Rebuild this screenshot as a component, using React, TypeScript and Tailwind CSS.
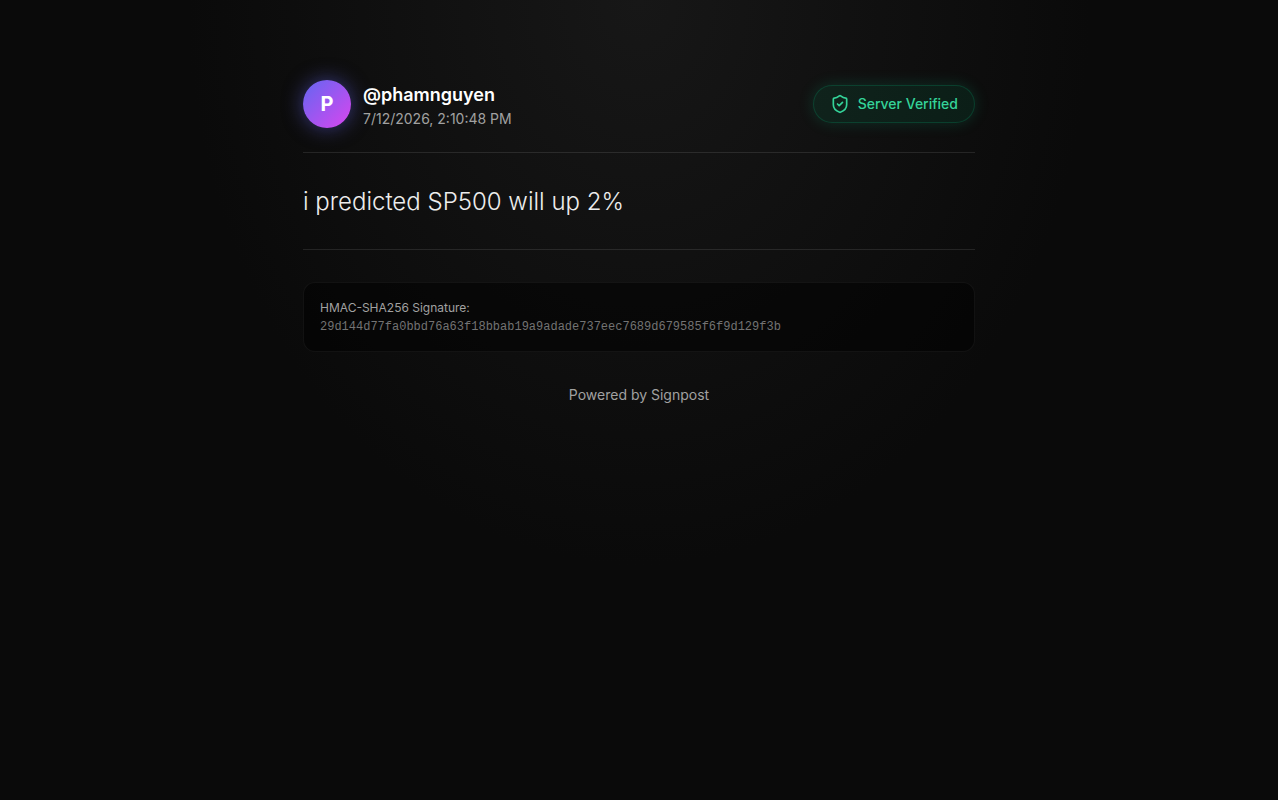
import React from "react";
import { ShieldCheck } from "lucide-react";

const post = {
  handle: "phamnguyen",
  signedAt: "7/12/2026, 2:10:48 PM",
  content: "i predicted SP500 will up 2%",
  signature: "29d144d77fa0bbd76a63f18bbab19a9adade737eec7689d679585f6f9d129f3b",
};

const PostHeader = () => {
  return (
    <header className="flex items-center justify-between border-b border-white/10 pb-6">
      <div className="flex items-center gap-3">
        <div className="flex size-12 items-center justify-center rounded-full bg-[linear-gradient(135deg,#6366f1,#d946ef)] text-xl font-bold text-white shadow-[0_0_20px_rgba(99,102,241,0.5)]">
          {post.handle.charAt(0).toUpperCase()}
        </div>
        <div>
          <h1 className="text-lg/[30px] font-semibold text-white">@{post.handle}</h1>
          <p className="text-sm/[18px] text-[#a1a1a1]">{post.signedAt}</p>
        </div>
      </div>
      <div className="flex items-center gap-2 rounded-full border border-emerald-500/20 bg-emerald-500/10 px-4 py-2 text-sm/5 font-medium text-[#34d399] shadow-[0_0_15px_rgba(16,185,129,0.2)]">
        <ShieldCheck className="size-5" aria-hidden="true" />
        <span>Server Verified</span>
      </div>
    </header>
  );
};

const App = () => {
  return (
    <div className="min-h-screen bg-[#0a0a0a] bg-[radial-gradient(ellipse_at_top,#171717,#0a0a0a_50%)] px-4 py-20 font-['Inter',sans-serif]">
      <main className="mx-auto max-w-2xl">
        <PostHeader />
        <section className="border-b border-white/10 pt-8 pb-[30px]">
          <p className="text-2xl/[34px] font-light text-[#ededed]">{post.content}</p>
        </section>
        <section className="mt-8 rounded-xl border border-white/5 bg-black/50 p-4">
          <h2 className="mb-0.5 text-xs/[18px] text-[#a1a1a1]">HMAC-SHA256 Signature:</h2>
          <p className="font-['Liberation_Mono',monospace] text-xs break-all text-[#737373]">{post.signature}</p>
        </section>
        <footer className="mt-8 text-center text-sm/[22px] text-[#a1a1a1]">Powered by Signpost</footer>
      </main>
    </div>
  );
};

export default App;
